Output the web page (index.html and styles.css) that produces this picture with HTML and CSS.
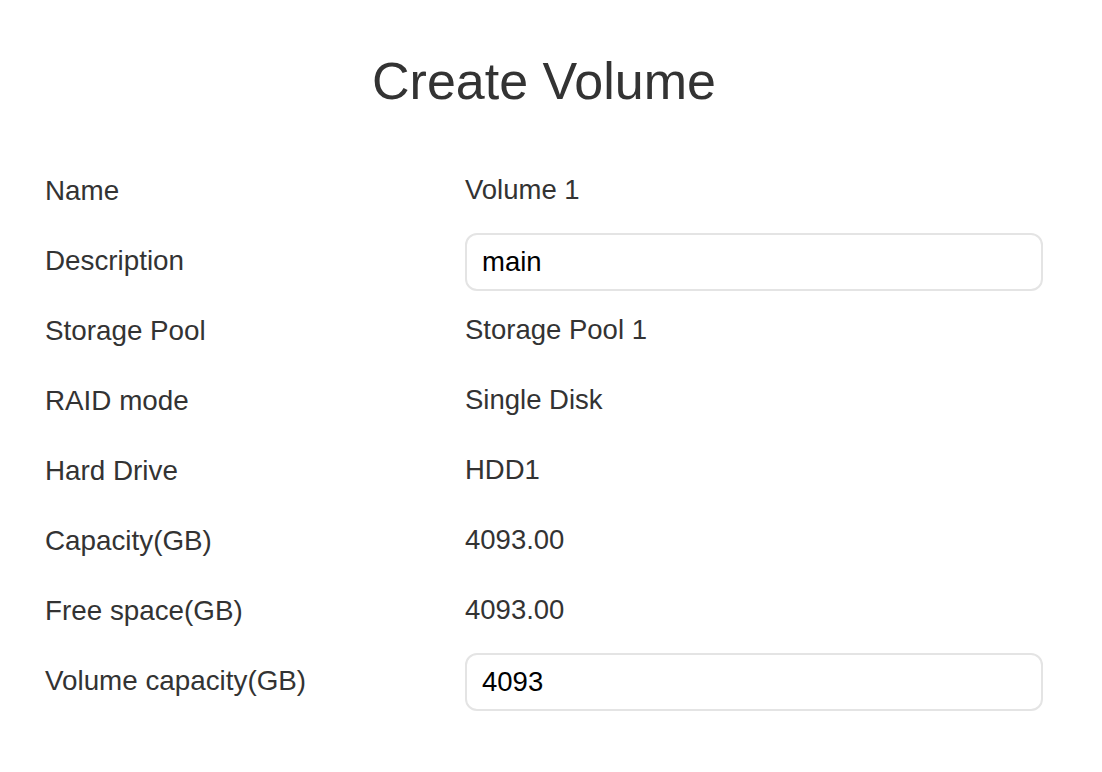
FILE: index.html
```html
<!DOCTYPE html>
<html>
<head>
<meta charset="utf-8">
<link rel="stylesheet" href="styles.css">
</head>
<body>
<div class="page">
  <h1 class="title">Create Volume</h1>
  <div class="form">
    <div class="label">Name</div><div class="value">Volume 1</div>
    <div class="label">Description</div><div class="value"><input class="field" type="text" value="main"></div>
    <div class="label">Storage Pool</div><div class="value">Storage Pool 1</div>
    <div class="label">RAID mode</div><div class="value">Single Disk</div>
    <div class="label">Hard Drive</div><div class="value">HDD1</div>
    <div class="label">Capacity(GB)</div><div class="value">4093.00</div>
    <div class="label">Free space(GB)</div><div class="value">4093.00</div>
    <div class="label">Volume capacity(GB)</div><div class="value"><input class="field" type="text" value="4093"></div>
  </div>
</div>
</body>
</html>
```
FILE: styles.css
```css
html, body {
  margin: 0;
  padding: 0;
  background: #ffffff;
}
body {
  font-family: "Liberation Sans", Arial, Helvetica, sans-serif;
  color: #333333;
}
.page {
  padding: 51px 59px 0 45px;
}
.title {
  margin: 0;
  font-size: 52px;
  line-height: 60px;
  font-weight: normal;
  text-align: center;
  color: #333333;
}
.form {
  margin-top: 45px;
  display: grid;
  grid-template-columns: 420px 1fr;
  grid-auto-rows: 70px;
  align-items: center;
}
.label {
  font-size: 27.8px;
  line-height: 32px;
}
.value {
  font-size: 27.5px;
  line-height: 32px;
  position: relative;
  top: -1px;
}
.field {
  display: block;
  box-sizing: border-box;
  width: 100%;
  height: 58px;
  margin: 3px 0 0;
  padding: 0 15px;
  border: 2px solid #e4e4e4;
  border-radius: 12px;
  font-family: "Liberation Sans", Arial, Helvetica, sans-serif;
  font-size: 27.5px;
  color: #000000;
  background: #ffffff;
  outline: none;
}
```
